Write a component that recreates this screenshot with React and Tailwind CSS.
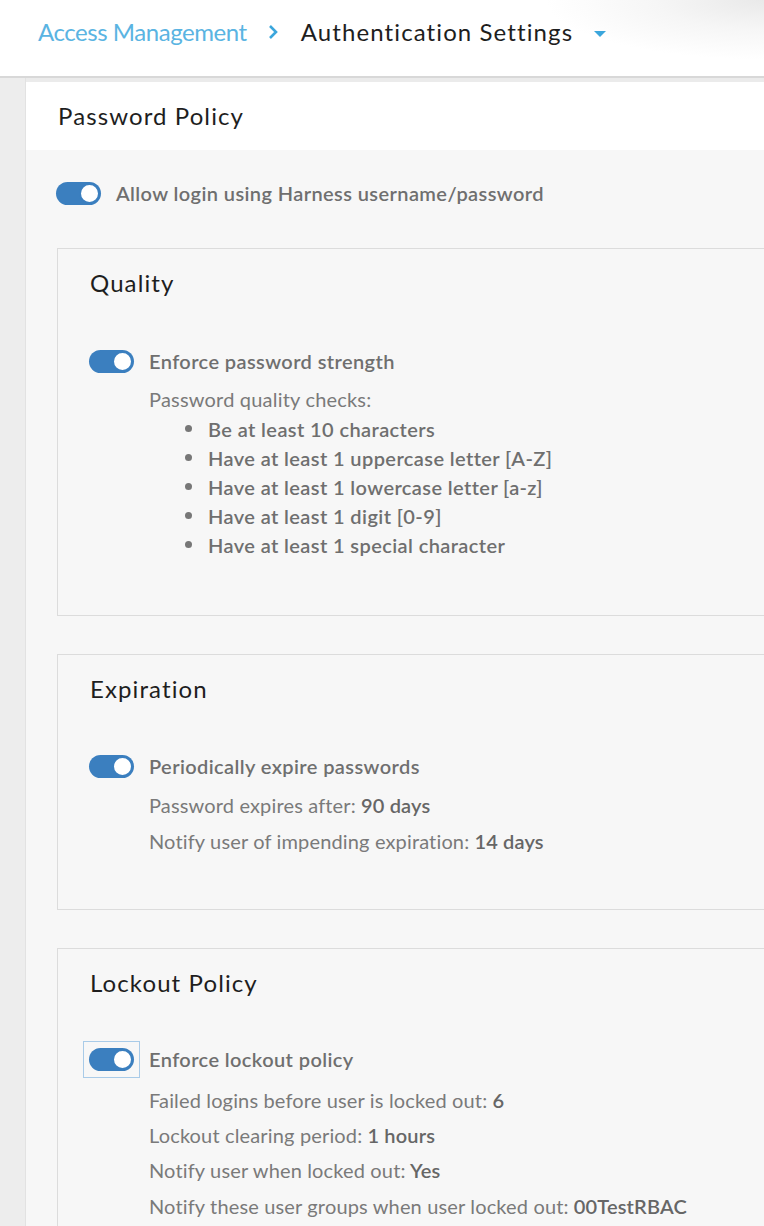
import React from "react";

function Toggle() {
  return (
    <div className="relative w-[45px] h-[23px] rounded-full bg-[#3b7fbf] shrink-0">
      <div className="absolute right-[1px] top-[1px] w-[21px] h-[21px] rounded-full bg-white border-[2px] border-[#3b7fbf]" />
    </div>
  );
}

function Card({ title, children, pb }) {
  return (
    <div className={`border border-[#dcdcdc] border-r-0 mr-[-20px] pl-[32px] pt-[19px] ${pb}`}>
      <div className="text-[24px] leading-[30px] tracking-[1.1px] text-[#1e1e1e]">{title}</div>
      {children}
    </div>
  );
}

function Detail({ label, value, lh = "leading-[36px]" }) {
  return (
    <div className={`text-[20px] ${lh} tracking-[0.15px] text-[#7a7a7a]`}>
      {label}
      {value && <span className="font-semibold text-[#666]"> {value}</span>}
    </div>
  );
}

const labelCls = "text-[20px] font-semibold tracking-[0.4px] text-[#6f6f6f]";

export default function App() {
  const checks = [
    "Be at least 10 characters",
    "Have at least 1 uppercase letter [A-Z]",
    "Have at least 1 lowercase letter [a-z]",
    "Have at least 1 digit [0-9]",
    "Have at least 1 special character",
  ];
  return (
    <div className="w-[764px] h-[1226px] overflow-hidden bg-[#f7f7f7] relative" style={{ fontFamily: "Lato, 'Open Sans', sans-serif" }}>
      <div className="h-[76px] bg-white flex items-center pl-[38px] pb-[12px] relative">
        <div className="absolute top-0 right-0 w-[220px] h-[60px] bg-[radial-gradient(ellipse_at_top_right,#e9e9e9_0%,#f6f6f6_35%,rgba(255,255,255,0)_70%)]" />
        <span className="relative text-[24px] tracking-[-0.45px] text-[#5ab4e2]">Access Management</span>
        <svg className="relative ml-[20px]" width="12" height="16" viewBox="0 0 12 16">
          <path d="M3 2 L9 8 L3 14" fill="none" stroke="#3ba6dc" strokeWidth="2.6" />
        </svg>
        <span className="relative ml-[22px] text-[24px] tracking-[1.1px] text-[#1e1e1e]">Authentication Settings</span>
        <svg className="relative ml-[20px] mt-[4px]" width="14" height="8" viewBox="0 0 14 8">
          <path d="M1 1 L13 1 L7 7 Z" fill="#3ba6dc" />
        </svg>
      </div>
      <div className="h-[2px] bg-[#d8d8d8]" />
      <div className="h-[4px] bg-[#ebebeb]" />
      <div className="flex">
        <div className="w-[26px] bg-[#ededed] border-r border-[#e2e2e2] h-[1200px] mt-[-4px]" />
        <div className="flex-1">
          <div className="h-[68px] bg-white flex items-center pl-[32px]">
            <span className="text-[24px] tracking-[1.1px] text-[#1e1e1e]">Password Policy</span>
          </div>
          <div className="pl-[30px] pt-[31px]">
            <div className="flex items-center gap-[15px] h-[24px]">
              <Toggle />
              <span className={labelCls}>Allow login using Harness username/password</span>
            </div>
            <div className="mt-[43px] ml-[1px] flex flex-col gap-[38px]">
              <Card title="Quality" pb="pb-[56px]">
                <div className="mt-[51px] -ml-[1px] flex items-center gap-[15px] h-[24px]">
                  <Toggle />
                  <span className={labelCls}>Enforce password strength</span>
                </div>
                <div className="ml-[59px] mt-[12px]">
                  <div className="text-[20px] leading-[29px] tracking-[0.2px] text-[#7a7a7a]">Password quality checks:</div>
                  <div>
                    {checks.map((c) => (
                      <div key={c} className="flex items-center h-[29px]">
                        <div className="ml-[36px] w-[7px] h-[7px] rounded-full bg-[#777]" />
                        <span className={`ml-[16px] ${labelCls}`}>{c}</span>
                      </div>
                    ))}
                  </div>
                </div>
              </Card>
              <Card title="Expiration" pb="pb-[50px]">
                <div className="mt-[50px] -ml-[1px] flex items-center gap-[15px] h-[24px]">
                  <Toggle />
                  <span className={labelCls}>Periodically expire passwords</span>
                </div>
                <div className="ml-[59px] mt-[9px]">
                  <Detail label="Password expires after:" value="90 days" />
                  <Detail label="Notify user of impending expiration:" value="14 days" />
                </div>
              </Card>
              <Card title="Lockout Policy" pb="pb-[40px]">
                <div className="mt-[49px] -ml-[1px] flex items-center gap-[15px] h-[24px]">
                  <div className="relative">
                    <Toggle />
                    <div className="absolute left-[-6px] right-[-6px] top-[-7px] bottom-[-7px] border border-[#a9cbe8]" />
                  </div>
                  <span className={labelCls}>Enforce lockout policy</span>
                </div>
                <div className="ml-[59px] mt-[11px]">
                  <Detail label="Failed logins before user is locked out:" value="6" />
                  <Detail label="Lockout clearing period:" value="1 hours" lh="leading-[35px]" />
                  <Detail label="Notify user when locked out:" value="Yes" lh="leading-[35px]" />
                  <Detail label="Notify these user groups when user locked out:" value="00TestRBAC" />
                </div>
              </Card>
            </div>
          </div>
        </div>
      </div>
    </div>
  );
}
